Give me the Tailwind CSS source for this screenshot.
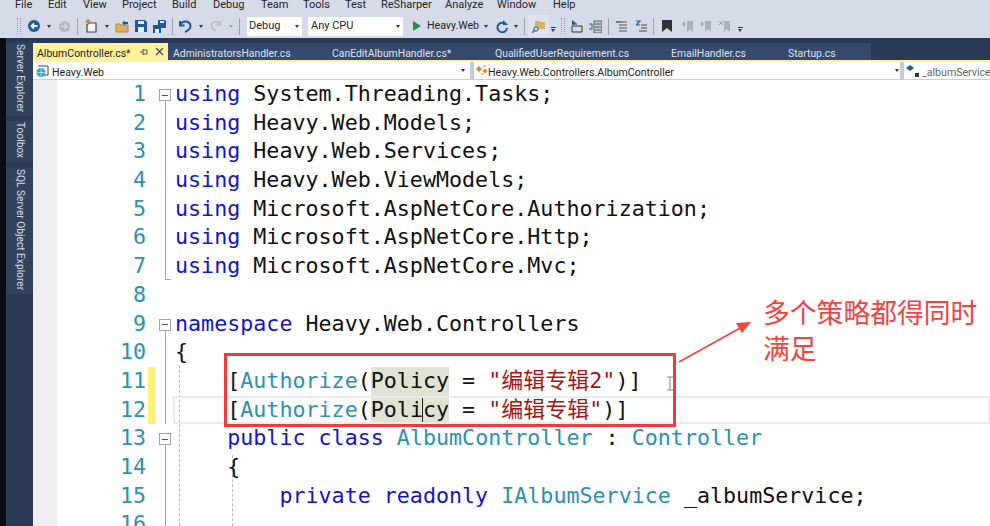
<!DOCTYPE html>
<html lang="en">
<head>
  <meta charset="UTF-8" />
  <title>AlbumController.cs - Visual Studio</title>
  <script src="https://cdn.jsdelivr.net/npm/@tailwindcss/browser@4"></script>
</head>
<body class="w-[990px] h-[526px] overflow-hidden bg-white font-['Roboto','Open_Sans',sans-serif]">
<div class="relative flex flex-col w-[990px] h-[526px] overflow-hidden">

  <!-- menu bar -->
  <div class="flex h-[14px] shrink-0 bg-[#d6dbe9] pl-[15px] text-[11px] leading-[10px] text-[#1e1e1e]">
    <span class="w-[33px]">File</span><span class="w-[35px]">Edit</span><span class="w-[39px]">View</span><span class="w-[50px]">Project</span><span class="w-[41px]">Build</span><span class="w-[48px]">Debug</span><span class="w-[42px]">Team</span><span class="w-[42px]">Tools</span><span class="w-[36px]">Test</span><span class="w-[64px]">ReSharper</span><span class="w-[52px]">Analyze</span><span class="w-[56px]">Window</span><span>Help</span>
  </div>

  <!-- toolbar -->
  <div class="flex items-center h-[24px] shrink-0 bg-[#d6dbe9] pl-[17px] text-[11px] text-[#1e1e1e]">
    <span class="w-[4px] h-[16px] border-x border-dotted border-[#9aa0b0]"></span>
    <svg class="ml-[7px] w-[12px] h-[12px]" viewBox="0 0 12 12"><circle cx="6" cy="6" r="6" fill="#1e5b96"/><path d="M9.5 6H4M6 3.5 3.5 6 6 8.500" stroke="#fff" stroke-width="1.800" fill="none"/></svg>
    <span class="ml-[7px] border-x-[2.500px] border-t-[3px] border-x-transparent border-t-[#333]"></span>
    <svg class="ml-[8px] w-[11px] h-[11px]" viewBox="0 0 12 12"><circle cx="6" cy="6" r="6" fill="#b4b8c4"/><path d="M2.500 6H8M6 3.500 8.500 6 6 8.500" stroke="#d6dbe9" stroke-width="1.800" fill="none"/></svg>
    <span class="ml-[7px] w-px h-[17px] bg-[#9da3b3]"></span>
    <svg class="ml-[7px] w-[13px] h-[14px]" viewBox="0 0 13 14"><path d="M4 4h7v9H2V6z" fill="#f6f6f6" stroke="#444" stroke-width="1.200"/><path d="M3 0v5M.5 2.500h5M1 1l4 3M5 1 1 4" stroke="#c98a1b"/></svg>
    <span class="ml-[7px] border-x-[2.500px] border-t-[3px] border-x-transparent border-t-[#333]"></span>
    <svg class="ml-[6px] w-[14px] h-[13px]" viewBox="0 0 14 13"><path d="M1 4h4l1 1h7v7H1z" fill="#dcb067" stroke="#b5892f"/><path d="M7 3 10 .5V2h3v2h-3v1.500z" fill="#1e5b96"/></svg>
    <svg class="ml-[6px] w-[12px] h-[12px]" viewBox="0 0 12 12"><path d="M0 0h10l2 2v10H0z" fill="#1e5b96"/><path d="M3 1h6v3H3zM3 7h6v5H3z" fill="#e8ecf4"/></svg>
    <svg class="ml-[6px] w-[13px] h-[13px]" viewBox="0 0 13 13"><path d="M5 0h7l1 1v7H5z" fill="#1e5b96"/><path d="M7 1h4v2H7z" fill="#e8ecf4"/><path d="M0 5h7l1 1v7H0z" fill="#1e5b96"/><path d="M2 9h4v4H2z" fill="#e8ecf4"/></svg>
    <span class="ml-[6px] w-px h-[17px] bg-[#9da3b3]"></span>
    <svg class="ml-[6px] w-[13px] h-[13px]" viewBox="0 0 13 13"><path d="M1.500 4.500C3 1 9 0 11 4c1.500 3.500-1 6.500-5 8M1 1v4.500h4.500" stroke="#1e5b96" stroke-width="2" fill="none"/></svg>
    <span class="ml-[7px] border-x-[2.500px] border-t-[3px] border-x-transparent border-t-[#333]"></span>
    <svg class="ml-[7px] w-[11px] h-[12px]" viewBox="0 0 13 13"><path d="M11.500 4.500C10 1 4 0 2 4c-1.500 3.500 1 6.500 5 8M12 1v4.500H7.500" stroke="#b4b8c4" stroke-width="1.600" fill="none"/></svg>
    <span class="ml-[8px] border-x-[2.500px] border-t-[3px] border-x-transparent border-t-[#9a9ea8]"></span>
    <span class="ml-[6px] w-px h-[17px] bg-[#9da3b3]"></span>
    <div class="flex items-center justify-between ml-[7px] w-[55px] h-[19px] bg-white pl-[2px] pr-[3px]"><span>Debug</span><span class="border-x-[2.500px] border-t-[3px] border-x-transparent border-t-[#333]"></span></div>
    <div class="flex items-center justify-between ml-[6px] w-[95px] h-[19px] bg-white pl-[3px] pr-[3px]"><span>Any CPU</span><span class="border-x-[2.500px] border-t-[3px] border-x-transparent border-t-[#333]"></span></div>
    <span class="ml-[10px] border-y-[5.500px] border-l-[8px] border-y-transparent border-l-[#2e8b3a]"></span>
    <span class="ml-[6px] w-[54px] text-[10.600px]">Heavy.Web</span>
    <span class="ml-[3px] border-x-[2.500px] border-t-[3px] border-x-transparent border-t-[#333]"></span>
    <svg class="ml-[8px] w-[12px] h-[13px]" viewBox="0 0 12 13"><path d="M10 4.500A4.800 4.800 0 1 0 11 8" stroke="#1e5b96" stroke-width="2" fill="none"/><path d="M7 0v5h5z" fill="#1e5b96"/></svg>
    <span class="ml-[6px] border-x-[2.500px] border-t-[3px] border-x-transparent border-t-[#333]"></span>
    <span class="ml-[6px] w-px h-[17px] bg-[#9da3b3]"></span>
    <div class="flex items-center ml-[3px] pl-[4px] w-[21px] h-[22px] bg-[#dee2ee]">
      <svg class="w-[13px] h-[13px]" viewBox="0 0 13 13"><path d="M3 1h4l1 1h5v7H3z" fill="#dcb067"/><circle cx="4" cy="9" r="2.200" fill="#d6dbe9" stroke="#1e5b96"/><path d="M2.500 10.500 0 13" stroke="#1e5b96" stroke-width="1.300"/></svg>
    </div>
    <span class="flex flex-col gap-[1px] items-center ml-[1px] mt-[6px] w-[6px]"><span class="w-[5px] h-px bg-[#333]"></span><span class="border-x-[2.500px] border-t-[3px] border-x-transparent border-t-[#333]"></span></span>
    <span class="ml-[5px] w-[4px] h-[16px] border-x border-dotted border-[#9aa0b0]"></span>
    <svg class="ml-[6px] w-[12px] h-[13px]" viewBox="0 0 12 13"><path d="M1 0l4 3-4 2z" fill="#1e5b96"/><path d="M1 6h10v6H1z" fill="none" stroke="#333"/><path d="M1 4h5" stroke="#333"/></svg>
    <svg class="ml-[6px] w-[13px] h-[13px]" viewBox="0 0 13 13"><path d="M5 1h8v12H5z" fill="#c9ceda" stroke="#555"/><path d="M6 4h6M6 7h6M6 10h6" stroke="#555"/><path d="M0 4h3v5H0" fill="none" stroke="#1e5b96"/></svg>
    <span class="ml-[6px] w-px h-[17px] bg-[#9da3b3]"></span>
    <svg class="ml-[7px] w-[11px] h-[11px]" viewBox="0 0 11 11"><path d="M0 1h11M3 4h8M3 7h8M3 10h8" stroke="#555"/><path d="M0 1h5" stroke="#2e8b3a"/></svg>
    <svg class="ml-[9px] w-[11px] h-[12px]" viewBox="0 0 11 12"><path d="M0 1h4L0 5h4" stroke="#1e5b96" fill="none" stroke-width="1.200"/><path d="M5 5h6M5 8h6M3 11h8" stroke="#444"/></svg>
    <span class="ml-[6px] w-px h-[17px] bg-[#9da3b3]"></span>
    <svg class="ml-[8px] w-[10px] h-[12px]" viewBox="0 0 10 12"><path d="M0 0h10v12L5 8l-5 4z" fill="#333"/></svg>
    <svg class="ml-[10px] w-[11px] h-[11px]" viewBox="0 0 11 11"><path d="M5 5V0h6v11L8 8 5 11z" fill="#aab0bd"/><path d="M0 3l3-3v6z" fill="#9aa0ad"/></svg>
    <svg class="ml-[7px] w-[11px] h-[11px]" viewBox="0 0 11 11"><path d="M5 5V0h6v11L8 8 5 11z" fill="#aab0bd"/><path d="M4 3 1 0v6z" fill="#9aa0ad"/></svg>
    <svg class="ml-[8px] w-[11px] h-[11px]" viewBox="0 0 11 11"><path d="M5 5V0h6v11L8 8 5 11z" fill="#aab0bd"/><path d="M0 0l4 4M4 0 0 4" stroke="#9aa0ad"/></svg>
    <span class="flex flex-col gap-[1px] items-center ml-[7px] mt-[6px] w-[6px]"><span class="w-[5px] h-px bg-[#333]"></span><span class="border-x-[2.500px] border-t-[3px] border-x-transparent border-t-[#333]"></span></span>
  </div>

  <div class="flex flex-1 min-h-0">
    <!-- black edge and tool window tabs -->
    <div class="w-[6px] shrink-0 bg-[#0b0d12]"></div>
    <div class="flex flex-col w-[27px] shrink-0 bg-[#2a3a57] pt-[5px] text-[10.200px] leading-[19px] text-[#d6dbe9] whitespace-nowrap">
      <div class="h-[73px] [writing-mode:vertical-rl] bg-[#31435f] pr-[3px] pt-[1px]">Server Explorer</div>
      <div class="mt-[5px] h-[41px] [writing-mode:vertical-rl] bg-[#31435f] pr-[3px] pt-[1px]">Toolbox</div>
      <div class="mt-[6px] h-[126px] [writing-mode:vertical-rl] bg-[#31435f] pr-[3px] pt-[1px]">SQL Server Object Explorer</div>
    </div>

    <div class="flex flex-col flex-1 min-w-0">
      <!-- document tabs -->
      <div class="h-[5px] shrink-0 bg-[#293a57] -ml-[27px]"></div>
      <div class="flex items-center h-[17px] shrink-0 bg-[#293a57] text-[10.400px] text-[#dfe4f0]">
        <div class="flex items-center w-[135px] h-full bg-[#fff29d] pl-[4px] text-[#1e1e1e]">
          <span class="w-[103px] pt-[4px] text-[10.500px]">AlbumController.cs*</span>
          <svg class="w-[8px] h-[8px]" viewBox="0 0 8 8"><path d="M0 4h3M3 1v6M3 2h4v4H3" stroke="#555" fill="none"/></svg>
          <svg class="ml-[7px] w-[9px] h-[9px]" viewBox="0 0 9 9"><path d="M1 1l7 7M8 1 1 8" stroke="#444" stroke-width="1.200"/></svg>
        </div>
        <div class="flex items-center h-full w-[703px] bg-[#34496c]">
          <span class="pl-[5px] pt-[4px] w-[164px]">AdministratorsHandler.cs</span>
          <span class="pt-[4px] w-[163px]">CanEditAlbumHandler.cs*</span>
          <span class="pt-[4px] w-[176px]">QualifiedUserRequirement.cs</span>
          <span class="pt-[4px] w-[117px]">EmailHandler.cs</span>
          <span class="pt-[4px]">Startup.cs</span>
        </div>
      </div>
      <div class="h-[2px] shrink-0 bg-[#fff29d]"></div>

      <!-- navigation bar -->
      <div class="flex h-[17px] shrink-0 bg-[#c5cbd9] text-[10.600px] text-[#1e1e1e]">
        <div class="flex items-center w-[437px] bg-white pl-[3px] pr-[5px]">
          <svg class="w-[13px] h-[12px]" viewBox="0 0 13 12"><path d="M2 1h10v9H6" fill="none" stroke="#444"/><circle cx="5" cy="7.500" r="4.500" fill="#3a9fd1"/><path d="M1 7.500h8M5 3v9" stroke="#d8f0fb" stroke-width=".7"/></svg>
          <span class="ml-[3px] pt-[4px] flex-1">Heavy.Web</span>
          <span class="border-x-[2.500px] border-t-[3px] border-x-transparent border-t-[#333]"></span>
        </div>
        <div class="flex items-center ml-[4px] w-[426px] bg-white pl-[2px] pr-[1px]">
          <svg class="w-[12px] h-[11px]" viewBox="0 0 12 11"><path d="M0 4l3-3 3 3-3 3z" fill="#d98d1f"/><path d="M7 6l2-2 2 2-2 2zM7 1h3M5 9h3" fill="#d98d1f" stroke="#d98d1f"/></svg>
          <span class="pt-[4px] flex-1">Heavy.Web.Controllers.AlbumController</span>
          <span class="border-x-[2.500px] border-t-[3px] border-x-transparent border-t-[#333]"></span>
        </div>
        <div class="flex items-center ml-[4px] flex-1 min-w-0 bg-white pl-[2px] whitespace-nowrap overflow-hidden text-[#666]">
          <svg class="shrink-0 w-[13px] h-[12px]" viewBox="0 0 13 12"><path d="M0 3l4-3 4 3-4 3z" fill="#1e5b96"/><path d="M9 8h4v4H9z" fill="#333"/></svg>
          <span class="ml-[3px] pt-[4px]">_albumService</span>
        </div>
      </div>

      <!-- editor -->
      <div class="relative flex-1 min-h-0 overflow-hidden border-t border-[#c8ccd6] bg-white font-['DejaVu_Sans_Mono',monospace] text-[21.68px] leading-[28.7px] text-[#111]">
        <div class="absolute left-0 top-0 bottom-0 w-[24px] bg-[#eeeef2]"></div>
        <div class="absolute left-[146px] top-[285px] bottom-0 w-0 border-l border-dashed border-[#bbb]"></div>
        <div class="absolute left-[199px] top-[375px] bottom-0 w-0 border-l border-dashed border-[#bbb]"></div>

        <div class="relative flex h-[28.7px] whitespace-pre"><span class="w-[113px] text-right text-[#2b91af]">1</span><span class="w-[13px]"></span><span class="relative w-[16px]"><span class="absolute left-[6px] top-[15px] bottom-0 w-px bg-[#a5a5a5]"></span><span class="absolute left-0 top-[9px] flex items-center justify-center w-[12px] h-[12px] border border-[#a5a5a5] bg-white"><span class="w-[6px] h-px bg-[#555]"></span></span></span><span><span class="text-[#1414c8]">using</span> System.Threading.Tasks;</span></div>
        <div class="relative flex h-[28.7px] whitespace-pre"><span class="w-[113px] text-right text-[#2b91af]">2</span><span class="w-[13px]"></span><span class="relative w-[16px]"><span class="absolute left-[6px] top-0 bottom-0 w-px bg-[#a5a5a5]"></span></span><span><span class="text-[#1414c8]">using</span> Heavy.Web.Models;</span></div>
        <div class="relative flex h-[28.7px] whitespace-pre"><span class="w-[113px] text-right text-[#2b91af]">3</span><span class="w-[13px]"></span><span class="relative w-[16px]"><span class="absolute left-[6px] top-0 bottom-0 w-px bg-[#a5a5a5]"></span></span><span><span class="text-[#1414c8]">using</span> Heavy.Web.Services;</span></div>
        <div class="relative flex h-[28.7px] whitespace-pre"><span class="w-[113px] text-right text-[#2b91af]">4</span><span class="w-[13px]"></span><span class="relative w-[16px]"><span class="absolute left-[6px] top-0 bottom-0 w-px bg-[#a5a5a5]"></span></span><span><span class="text-[#1414c8]">using</span> Heavy.Web.ViewModels;</span></div>
        <div class="relative flex h-[28.7px] whitespace-pre"><span class="w-[113px] text-right text-[#2b91af]">5</span><span class="w-[13px]"></span><span class="relative w-[16px]"><span class="absolute left-[6px] top-0 bottom-0 w-px bg-[#a5a5a5]"></span></span><span><span class="text-[#1414c8]">using</span> Microsoft.AspNetCore.Authorization;</span></div>
        <div class="relative flex h-[28.7px] whitespace-pre"><span class="w-[113px] text-right text-[#2b91af]">6</span><span class="w-[13px]"></span><span class="relative w-[16px]"><span class="absolute left-[6px] top-0 bottom-0 w-px bg-[#a5a5a5]"></span></span><span><span class="text-[#1414c8]">using</span> Microsoft.AspNetCore.Http;</span></div>
        <div class="relative flex h-[28.7px] whitespace-pre"><span class="w-[113px] text-right text-[#2b91af]">7</span><span class="w-[13px]"></span><span class="relative w-[16px]"><span class="absolute left-[6px] top-0 h-[28px] w-[6px] border-l border-b border-[#a5a5a5]"></span></span><span><span class="text-[#1414c8]">using</span> Microsoft.AspNetCore.Mvc;</span></div>
        <div class="relative flex h-[28.7px] whitespace-pre"><span class="w-[113px] text-right text-[#2b91af]">8</span></div>
        <div class="relative flex h-[28.7px] whitespace-pre"><span class="w-[113px] text-right text-[#2b91af]">9</span><span class="w-[13px]"></span><span class="relative w-[16px]"><span class="absolute left-[6px] top-[15px] bottom-0 w-px bg-[#a5a5a5]"></span><span class="absolute left-0 top-[9px] flex items-center justify-center w-[12px] h-[12px] border border-[#a5a5a5] bg-white"><span class="w-[6px] h-px bg-[#555]"></span></span></span><span><span class="text-[#1414c8]">namespace</span> Heavy.Web.Controllers</span></div>
        <div class="relative flex h-[28.7px] whitespace-pre"><span class="w-[113px] text-right text-[#2b91af]">10</span><span class="w-[13px]"></span><span class="relative w-[16px]"><span class="absolute left-[6px] top-0 bottom-0 w-px bg-[#a5a5a5]"></span></span><span>{</span></div>
        <div class="relative flex h-[28.7px] whitespace-pre"><span class="w-[113px] text-right text-[#2b91af]">11</span><span class="w-[2px]"></span><span class="w-[7px] bg-[#fff176]"></span><span class="w-[4px]"></span><span class="relative w-[16px]"><span class="absolute left-[6px] top-0 bottom-0 w-px bg-[#a5a5a5]"></span></span><span>    [<span class="text-[#2b91af]">Authorize</span>(<span class="inline-block bg-[#e0e3d2]">Policy</span> = <span class="text-[#a31515]">"<span class="font-['Noto_Sans_CJK_SC',sans-serif] text-[22px] leading-[0]">编辑专辑</span>2"</span>)]</span></div>
        <div class="relative flex h-[28.7px] whitespace-pre"><span class="w-[113px] text-right text-[#2b91af]">12</span><span class="w-[2px]"></span><span class="w-[7px] bg-[#fff176]"></span><span class="w-[4px]"></span><span class="relative w-[14px]"><span class="absolute left-[6px] top-0 bottom-0 w-px bg-[#a5a5a5]"></span></span><span class="flex-1 border-2 border-[#eaeaf2] leading-[24.7px]"><span>    [<span class="text-[#2b91af]">Authorize</span>(<span class="inline-block bg-[#e0e3d2]">Poli<span class="inline-block border-l border-[#222] -ml-px">cy</span></span> = <span class="text-[#a31515]">"<span class="font-['Noto_Sans_CJK_SC',sans-serif] text-[22px] leading-[0]">编辑专辑</span>"</span>)]</span></span></div>
        <div class="relative flex h-[28.7px] whitespace-pre"><span class="w-[113px] text-right text-[#2b91af]">13</span><span class="w-[13px]"></span><span class="relative w-[16px]"><span class="absolute left-[6px] top-[15px] bottom-0 w-px bg-[#a5a5a5]"></span><span class="absolute left-0 top-[9px] flex items-center justify-center w-[12px] h-[12px] border border-[#a5a5a5] bg-white"><span class="w-[6px] h-px bg-[#555]"></span></span></span><span>    <span class="text-[#1414c8]">public class</span> <span class="text-[#2b91af]">AlbumController</span> : <span class="text-[#2b91af]">Controller</span></span></div>
        <div class="relative flex h-[28.7px] whitespace-pre"><span class="w-[113px] text-right text-[#2b91af]">14</span><span class="w-[13px]"></span><span class="relative w-[16px]"><span class="absolute left-[6px] top-0 bottom-0 w-px bg-[#a5a5a5]"></span></span><span>    {</span></div>
        <div class="relative flex h-[28.7px] whitespace-pre"><span class="w-[113px] text-right text-[#2b91af]">15</span><span class="w-[13px]"></span><span class="relative w-[16px]"><span class="absolute left-[6px] top-0 bottom-0 w-px bg-[#a5a5a5]"></span></span><span>        <span class="text-[#1414c8]">private readonly</span> <span class="text-[#2b91af]">IAlbumService</span> _albumService;</span></div>
        <div class="relative flex h-[28.7px] whitespace-pre"><span class="w-[113px] text-right text-[#2b91af]">16</span><span class="w-[13px]"></span><span class="relative w-[16px]"><span class="absolute left-[6px] top-0 bottom-0 w-px bg-[#a5a5a5]"></span></span></div>
      </div>
    </div>
  </div>

  <!-- red annotation over the editor -->
  <div class="absolute left-[224px] top-[353px] w-[452px] h-[74px] border-[3px] border-[#f23a3a]"></div>
  <svg class="absolute left-[676px] top-[318px] w-[76px] h-[48px]" viewBox="0 0 76 48"><path d="M3 44 66 9" stroke="#f44242" stroke-width="1.600"/><path d="M75 4 60 5 66 15z" fill="#f44242"/></svg>
  <div class="absolute left-[763px] top-[294px] w-[222px] text-[26.800px] leading-[36px] text-[#f44242] font-['Noto_Sans_CJK_SC',sans-serif]">多个策略都得同时<br />满足</div>
  <svg class="absolute left-[667px] top-[376px] w-[7px] h-[16px]" viewBox="0 0 7 16"><path d="M0 1h6M3 1v13M0 14h6" stroke="#888" fill="none"/></svg>
</div>
</body>
</html>
